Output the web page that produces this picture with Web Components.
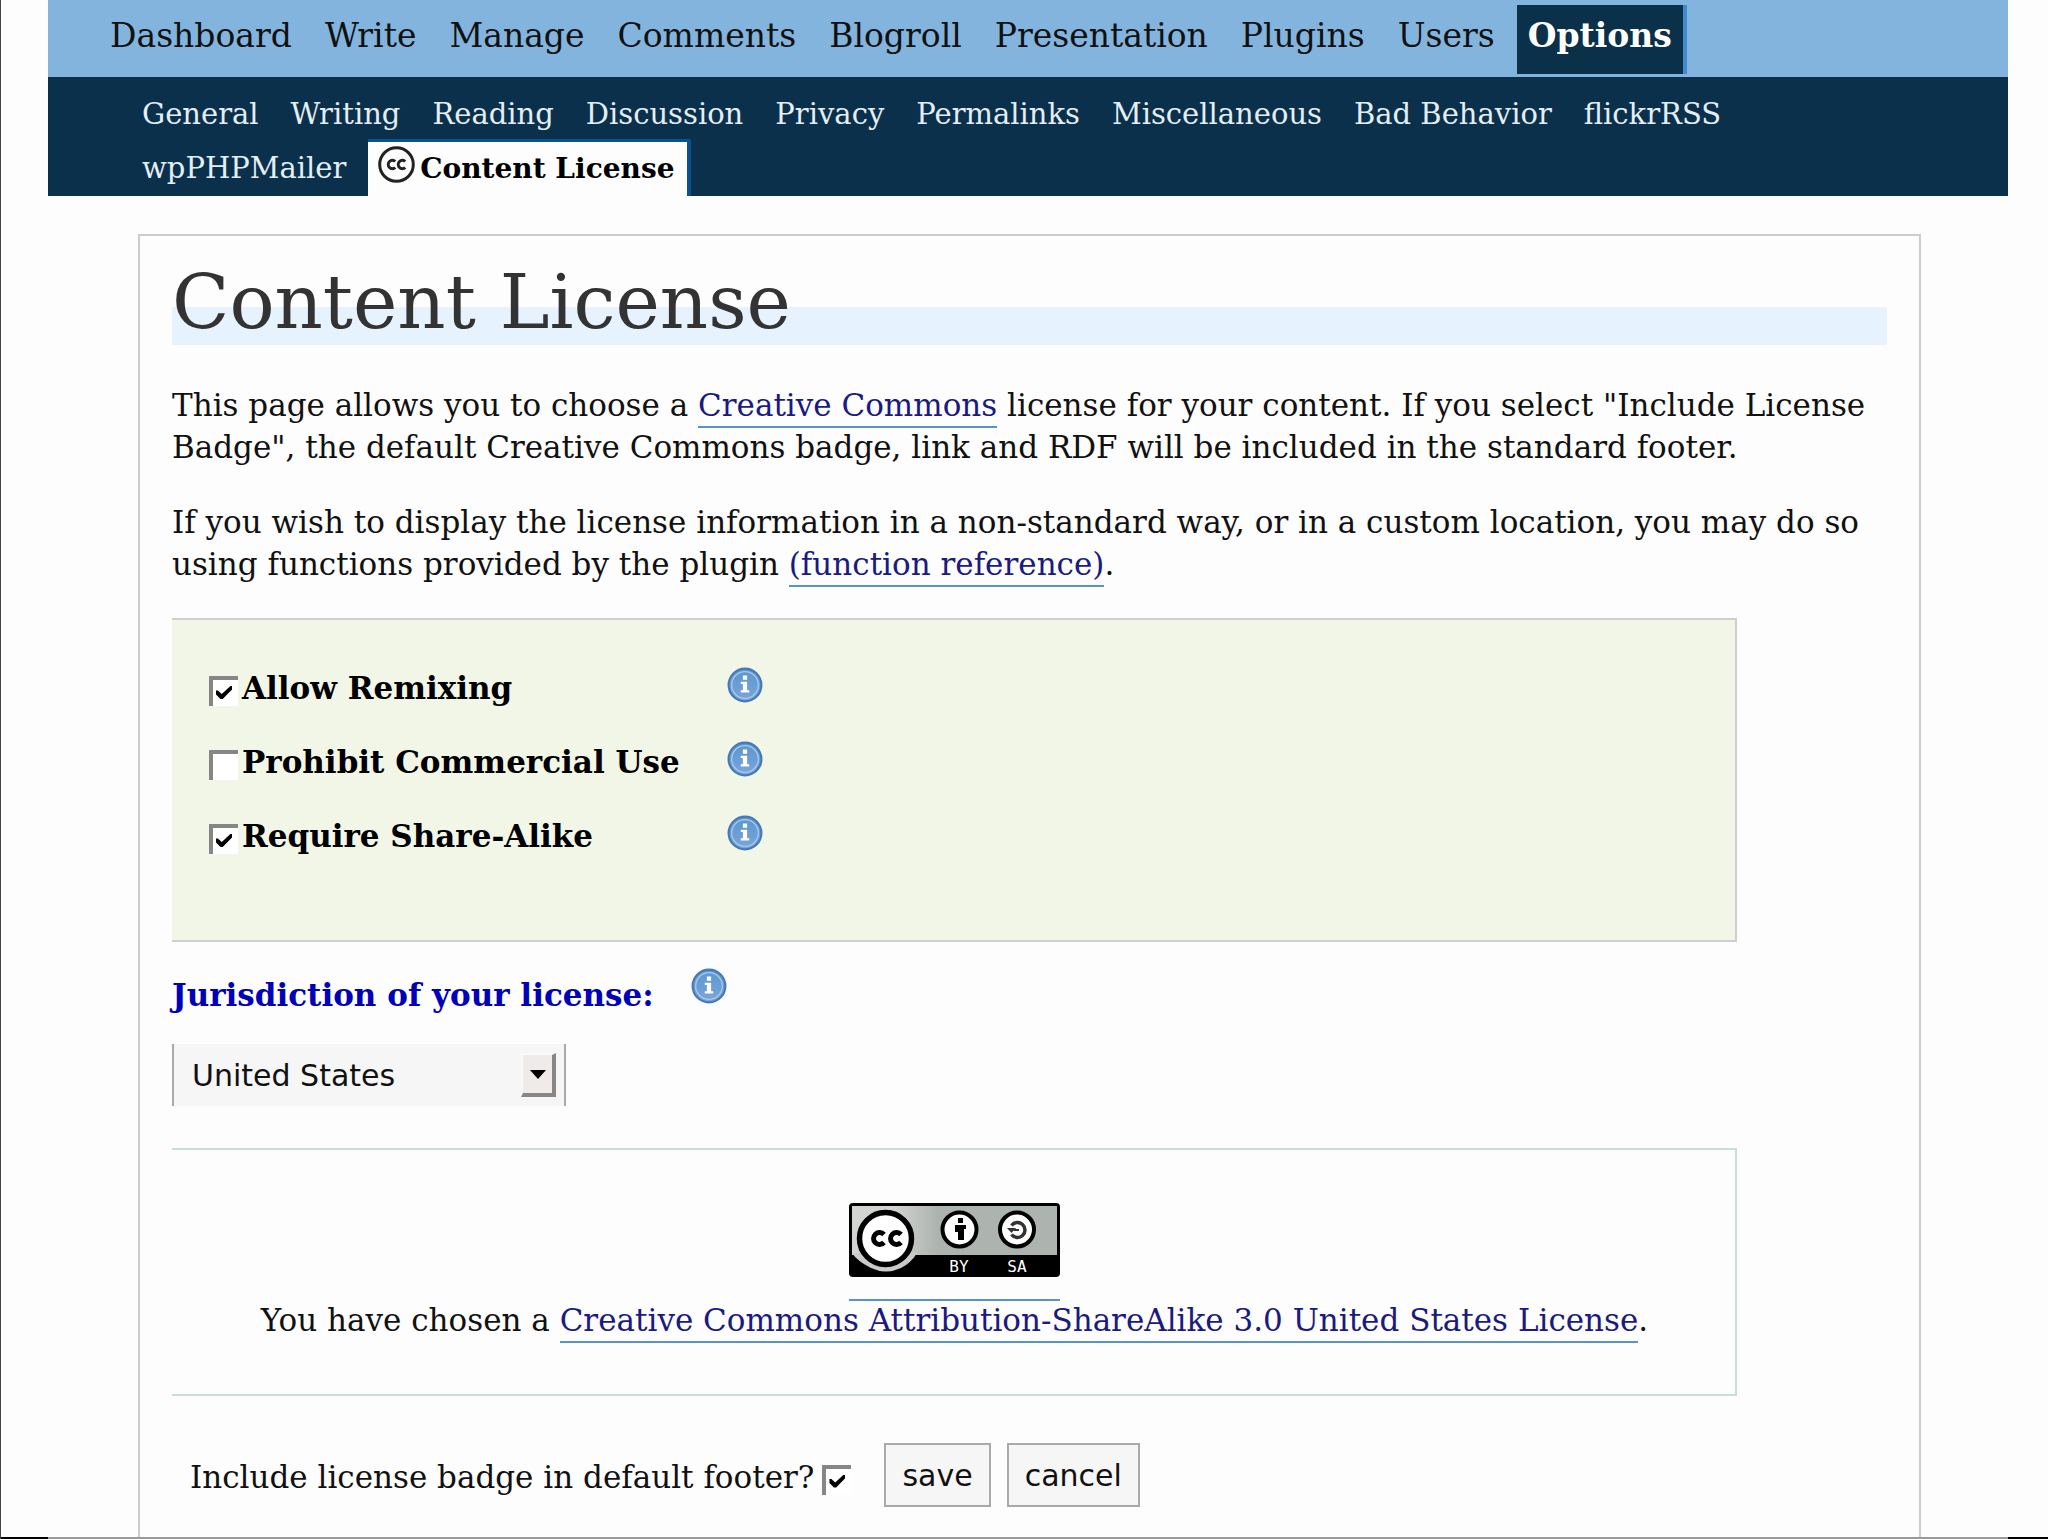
<!DOCTYPE html>
<html lang="en">
<head>
<meta charset="utf-8">
<title>Content License</title>
<style>
    body {
        margin: 0;
        min-height: 100vh;
        box-sizing: border-box;
        display: flex;
        flex-direction: column;
        border-left: 1px solid #444;
        background: #fdfdfd;
        color: #111;
        font: 31px/42px "DejaVu Serif", serif;
    }

    license-page {
        flex: 1;
    }
</style>
</head>
<body>
<main-menu>
    <main-tab href="#dashboard">Dashboard</main-tab>
    <main-tab href="#write">Write</main-tab>
    <main-tab href="#manage">Manage</main-tab>
    <main-tab href="#comments">Comments</main-tab>
    <main-tab href="#blogroll">Blogroll</main-tab>
    <main-tab href="#presentation">Presentation</main-tab>
    <main-tab href="#plugins">Plugins</main-tab>
    <main-tab href="#users">Users</main-tab>
    <main-tab href="#options" current>Options</main-tab>
</main-menu>
<sub-menu>
    <sub-tab href="#general">General</sub-tab>
    <sub-tab href="#writing">Writing</sub-tab>
    <sub-tab href="#reading">Reading</sub-tab>
    <sub-tab href="#discussion">Discussion</sub-tab>
    <sub-tab href="#privacy">Privacy</sub-tab>
    <sub-tab href="#permalinks">Permalinks</sub-tab>
    <sub-tab href="#misc">Miscellaneous</sub-tab>
    <sub-tab href="#bb">Bad Behavior</sub-tab>
    <sub-tab href="#flickr">flickrRSS</sub-tab>
    <sub-tab href="#mailer">wpPHPMailer</sub-tab>
    <sub-tab href="#license" current><cc-logo slot="icon"></cc-logo>Content License</sub-tab>
</sub-menu>
<license-page></license-page>
<page-edge></page-edge>

<script>
// Small helper: every element here is a template in an open shadow root.
function define (name, html, setup) {
    const template = document.createElement('template');
    template.innerHTML = html;

    customElements.define(name, class extends HTMLElement {
        constructor () {
            super();
            this._shadowRoot = this.attachShadow({ mode: 'open' });
            this._shadowRoot.appendChild(template.content.cloneNode(true));
            if (setup) setup(this, this._shadowRoot);
        }
    });
}

function setLink (host, root) {
    root.querySelector('a').setAttribute('href', host.getAttribute('href') || '#');
}

define('main-menu', `
    <style>
        :host {
            display: block;
            margin: 0 40px 0 47px;
            background: #83b4de;
        }

        nav {
            display: flex;
            align-items: flex-start;
            gap: 11px;
            padding: 5px 51px 3px;
        }
    </style>
    <nav><slot></slot></nav>
`);

define('main-tab', `
    <style>
        :host {
            display: block;
        }

        a {
            display: block;
            padding: 11px 11px 19px;
            font-size: 33px;
            line-height: 39px;
            color: #111;
            text-decoration: none;
            white-space: nowrap;
        }

        :host([current]) a {
            background: #0b3049;
            border-right: 4px solid #3f8ccb;
            color: #fff;
            font-weight: bold;
        }
    </style>
    <a><slot></slot></a>
`, setLink);

define('sub-menu', `
    <style>
        :host {
            display: block;
            margin: 0 40px 0 47px;
            background: #0b304b;
        }

        nav {
            display: flex;
            flex-wrap: wrap;
            align-items: flex-start;
            column-gap: 12px;
            padding: 8px 184px 0 84px;
        }
    </style>
    <nav><slot></slot></nav>
`);

define('sub-tab', `
    <style>
        :host {
            display: block;
        }

        a {
            display: flex;
            align-items: flex-start;
            gap: 5px;
            padding: 13px 10px 8px;
            font-size: 29px;
            line-height: 33px;
            color: #e3eef5;
            text-decoration: none;
            white-space: nowrap;
        }

        :host([current]) a {
            border-top: 3px solid #0a5191;
            border-right: 4px solid #0a5191;
            padding: 10px 12px 11px 10px;
            background: #fdfdfd;
            color: #000;
            font-size: 28px;
            font-weight: bold;
        }
    </style>
    <a><slot name="icon"></slot><slot></slot></a>
`, setLink);

define('cc-logo', `
    <style>
        :host {
            display: block;
            height: 37px;
            margin: -6px 0;
        }

        svg {
            display: block;
        }
    </style>
    <svg width="37" height="37" viewBox="0 0 37 37" fill="none" stroke="#222">
        <circle cx="18.5" cy="18.5" r="16.8" stroke-width="3"/>
        <path d="M17.2 15.6a4 4.2 0 1 0 0 5.8M27.2 15.6a4 4.2 0 1 0 0 5.8" stroke-width="3"/>
    </svg>
`);

define('info-icon', `
    <style>
        :host {
            display: block;
        }

        a, svg {
            display: block;
        }
    </style>
    <a href="#help" title="More information">
        <svg width="36" height="36" viewBox="0 0 34 34">
            <defs>
                <linearGradient id="face" x1="0" y1="0" x2="0" y2="1">
                    <stop offset="0" stop-color="#5b96cf"/>
                    <stop offset="1" stop-color="#7ba6d8"/>
                </linearGradient>
            </defs>
            <circle cx="17" cy="17" r="15.5" fill="url(#face)" stroke="#4679b6" stroke-width="2"/>
            <circle cx="17" cy="17" r="12.6" fill="none" stroke="#a9c9ea" stroke-width="1.2"/>
            <path d="M15 8h4v4h-4zM13 14h6v8h2v2h-8v-2h2v-6h-2z" fill="#fff"/>
        </svg>
    </a>
`);

define('tick-box', `
    <style>
        :host {
            display: block;
        }

        label {
            display: flex;
            align-items: center;
            gap: 4px;
        }

        :host([trailing]) label {
            flex-direction: row-reverse;
            gap: 8px;
        }

        :host([strong]) label {
            font-weight: bold;
            color: #000;
        }

        input {
            appearance: none;
            box-sizing: border-box;
            width: 29px;
            height: 30px;
            margin: 6px 0 0;
            border: solid #868686;
            border-width: 4px 0 0 4px;
            background: #fff;
        }

        input:checked::before {
            content: "";
            display: block;
            width: 16px;
            height: 13px;
            margin: 6px 0 0 3px;
            background: #000;
            clip-path: polygon(0 34%, 12% 34%, 36% 62%, 90% 0, 100% 0, 100% 26%, 42% 100%, 28% 100%, 0 66%);
        }
    </style>
    <label><input type="checkbox"><span><slot></slot></span></label>
`, (host, root) => {
    root.querySelector('input').checked = host.hasAttribute('checked');
});

define('license-badge', `
    <style>
        :host {
            display: block;
        }

        a {
            display: inline-block;
            vertical-align: top;
            padding-bottom: 22px;
            border-bottom: 2px solid #5a93c6;
        }

        svg {
            display: block;
        }

        text {
            font: 16px "DejaVu Sans Mono", monospace;
            fill: #fff;
        }
    </style>
    <a href="#deed" title="Creative Commons License">
        <svg width="211" height="74" viewBox="0 0 211 74">
            <defs>
                <linearGradient id="shade">
                    <stop offset="0.2" stop-color="#d2d4d2"/>
                    <stop offset="0.42" stop-color="#adb3ae"/>
                </linearGradient>
            </defs>
            <rect width="211" height="74" rx="4"/>
            <rect x="3" y="3" width="205" height="49" fill="url(#shade)"/>
            <path d="M3 50H68Q62 60 52 65Q37 72 22 65Q8 58 3 50z" fill="#c9cbc9"/>
            <circle cx="36.5" cy="35.5" r="26" fill="#fff" stroke="#000" stroke-width="5.5"/>
            <path d="M35 31.5a6 6 0 1 0 0 8M52 31.5a6 6 0 1 0 0 8" fill="none" stroke="#000" stroke-width="5"/>
            <g fill="#fff" stroke="#000" stroke-width="4">
                <circle cx="110.5" cy="26.5" r="17"/>
                <circle cx="168" cy="26.5" r="17"/>
            </g>
            <rect x="109" y="15" width="5" height="5"/>
            <path d="M106 22h11v4h-2v11h-6v-8h-3z"/>
            <path d="M162.500 22.500a7.500 7.500 0 1 1 0 9" fill="none" stroke="#333" stroke-width="3.500"/>
            <path d="M158 25h9l-4.500 5z" fill="#333"/>
            <path d="M165 27h5" stroke="#333" stroke-width="2"/>
            <text x="110" y="69" text-anchor="middle">BY</text>
            <text x="168" y="69" text-anchor="middle">SA</text>
        </svg>
    </a>
`);

define('license-options', `
    <style>
        :host {
            display: grid;
            grid-template-columns: 518px auto;
            justify-content: start;
            align-items: start;
            row-gap: 32px;
            margin-right: 150px;
            padding: 47px 37px 83px;
            border: 2px solid #cfcfcf;
            border-left: 0;
            background: #f2f6e6;
        }
    </style>
    <tick-box strong checked>Allow Remixing</tick-box><info-icon></info-icon>
    <tick-box strong>Prohibit Commercial Use</tick-box><info-icon></info-icon>
    <tick-box strong checked>Require Share-Alike</tick-box><info-icon></info-icon>
`);

define('jurisdiction-field', `
    <style>
        :host {
            display: flex;
            flex-direction: column;
            gap: 28px;
        }

        .caption {
            display: flex;
            align-items: flex-end;
            gap: 37px;
        }

        label {
            font-weight: bold;
            color: #0000b8;
        }

        info-icon {
            margin-bottom: 12px;
        }

        .picker {
            display: grid;
            align-items: center;
            width: 394px;
        }

        select, .arrow {
            grid-area: 1 / 1;
        }

        select {
            appearance: none;
            width: 100%;
            height: 62px;
            padding: 0 60px 0 18px;
            border: solid #aaa;
            border-width: 0 2px;
            border-radius: 0;
            background: #f6f6f6;
            color: #111;
            font: 30px "DejaVu Sans", sans-serif;
        }

        .arrow {
            justify-self: end;
            display: grid;
            place-items: center;
            box-sizing: border-box;
            width: 35px;
            height: 44px;
            margin-right: 10px;
            border: solid;
            border-width: 2px 4px 4px 2px;
            border-color: #fafafa #8a8686 #8a8686 #fafafa;
            background: #efebe9;
            pointer-events: none;
        }

        .arrow::before {
            content: "";
            border: solid transparent;
            border-width: 9px 8px 0;
            border-top-color: #000;
        }
    </style>
    <div class="caption">
        <label for="jurisdiction">Jurisdiction of your license:</label>
        <info-icon></info-icon>
    </div>
    <div class="picker">
        <select id="jurisdiction"><option>United States</option></select>
        <span class="arrow"></span>
    </div>
`);

define('chosen-license', `
    <style>
        :host {
            display: block;
            margin-right: 150px;
            padding: 53px 0 55px 2px;
            border: 2px solid #c6e0d7;
            border-left: 0;
            text-align: center;
        }

        p {
            margin: 0;
            line-height: 38px;
        }

        p a {
            padding-bottom: 3px;
            border-bottom: 2px solid #5a93c6;
            color: #1a1a80;
            text-decoration: none;
        }
    </style>
    <license-badge></license-badge>
    <p>You have chosen a <a href="#deed">Creative Commons Attribution-ShareAlike 3.0 United States License</a>.</p>
`);

define('save-bar', `
    <style>
        :host {
            display: flex;
            align-items: center;
            gap: 16px;
            padding-left: 18px;
        }

        tick-box {
            margin: 3px 17px 0 0;
        }

        button {
            height: 64px;
            padding: 0 16px;
            border: 2px solid #a9a9a9;
            border-radius: 0;
            background: #f7f6f7;
            color: #111;
            font: 30px "DejaVu Sans", sans-serif;
        }
    </style>
    <tick-box trailing checked>Include license badge in default footer?</tick-box>
    <button type="submit">save</button>
    <button type="reset">cancel</button>
`);

define('license-page', `
    <style>
        :host {
            display: block;
            margin: 38px 127px 0 137px;
            padding: 23px 32px 28px;
            border: 2px solid #ccc;
            border-bottom: 0;
        }

        h2 {
            margin: 0 0 39px;
            font-size: 75px;
            font-weight: normal;
            line-height: 86px;
            color: #333;
            background: linear-gradient(#e6f2fe, #e6f2fe) bottom / 100% 38px no-repeat;
        }

        p {
            margin: 0 0 33px;
        }

        a {
            padding-bottom: 3px;
            border-bottom: 2px solid #5a93c6;
            color: #1a1a80;
            text-decoration: none;
        }

        jurisdiction-field {
            margin: 26px 0 42px;
        }

        save-bar {
            margin-top: 47px;
        }
    </style>
    <h2>Content License</h2>
    <p>This page allows you to choose a <a href="#cc">Creative Commons</a> license for your content. If you select "Include License Badge", the default Creative Commons badge, link and RDF will be included in the standard footer.</p>
    <p>If you wish to display the license information in a non-standard way, or in a custom location, you may do so using functions provided by the plugin <a href="#functions">(function reference)</a>.</p>
    <form>
        <license-options></license-options>
        <jurisdiction-field></jurisdiction-field>
        <chosen-license></chosen-license>
        <save-bar></save-bar>
    </form>
`);

define('page-edge', `
    <style>
        :host {
            display: block;
            height: 2px;
            padding: 0 40px 0 47px;
            background: #000;
        }

        div {
            height: 2px;
            background: #999;
        }
    </style>
    <div></div>
`);
</script>
</body>
</html>
